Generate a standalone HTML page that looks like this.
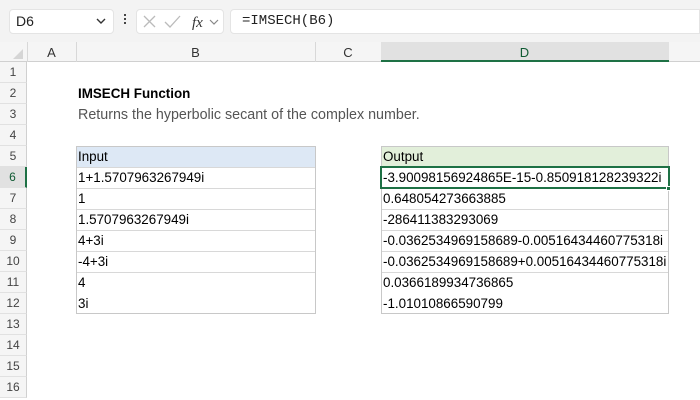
<!DOCTYPE html><html><head><style>
*{margin:0;padding:0;box-sizing:border-box}
body{width:700px;height:400px;overflow:hidden;background:#fff;font-family:"Liberation Sans",Arial,sans-serif;position:relative}
.a{position:absolute}
.t{font-size:13.4px;color:#000;white-space:nowrap;line-height:20px;padding-left:2px}
.rh{position:absolute;left:0;width:27px;height:21px;text-align:center;font-size:12px;color:#444;line-height:21px;border-bottom:1px solid #e1e1e1;background:#f5f5f5;border-right:1px solid #d0d0d0}
</style></head><body>
<div class="a" style="left:0;top:0;width:700px;height:42px;background:#f3f3f3"></div>
<div class="a" style="left:9px;top:9px;width:105px;height:25px;background:#fff;border-radius:4px;border:1px solid #e4e4e4"></div>
<div class="a" style="left:16px;top:13px;font-size:14px;color:#222">D6</div>
<svg class="a" style="left:95px;top:16px" width="12" height="10"><path d="M2 3 L6 7 L10 3" fill="none" stroke="#333" stroke-width="1.4"/></svg>
<div class="a" style="left:124px;top:14px;width:2px;height:2px;background:#444;box-shadow:0 4px 0 #444,0 8px 0 #444"></div>
<div class="a" style="left:136px;top:9px;width:88px;height:25px;background:#fff;border-radius:4px;border:1px solid #e4e4e4"></div>
<svg class="a" style="left:140px;top:12px" width="85" height="20"><path d="M4 4 L15 15 M15 4 L4 15" stroke="#bbb" stroke-width="1.3"/><path d="M25 10 L30 15 L40 4" fill="none" stroke="#bbb" stroke-width="1.3"/><text x="52" y="15" font-family="Liberation Serif" font-style="italic" font-size="15" fill="#333">fx</text><path d="M70 8 L74 12 L78 8" fill="none" stroke="#888" stroke-width="1.2"/></svg>
<div class="a" style="left:230px;top:9px;width:470px;height:25px;background:#fff;border-radius:4px 0 0 4px;border:1px solid #e4e4e4"></div>
<div class="a" style="left:242px;top:13px;font-family:'Liberation Mono',monospace;font-size:14px;color:#222">=IMSECH(B6)</div>
<div class="a" style="left:0;top:42px;width:700px;height:20px;background:#f5f5f5;border-bottom:1px solid #d0d0d0"></div>
<svg class="a" style="left:12px;top:48px" width="12" height="12"><path d="M11 1 L11 11 L1 11 Z" fill="#d5d5d5"/></svg>
<div class="a" style="left:27px;top:42px;width:1px;height:20px;background:#d8d8d8"></div>
<div class="a" style="left:76px;top:42px;width:1px;height:20px;background:#d8d8d8"></div>
<div class="a" style="left:315px;top:42px;width:1px;height:20px;background:#d8d8d8"></div>
<div class="a" style="left:381px;top:42px;width:1px;height:20px;background:#d8d8d8"></div>
<div class="a" style="left:668px;top:42px;width:1px;height:20px;background:#d8d8d8"></div>
<div class="a" style="left:381px;top:42px;width:288px;height:20px;background:#e1e1e1;border-bottom:2px solid #1e7145"></div>
<div class="a" style="left:27px;top:45px;width:49px;text-align:center;font-size:13px;color:#333">A</div>
<div class="a" style="left:76px;top:45px;width:239px;text-align:center;font-size:13px;color:#333">B</div>
<div class="a" style="left:315px;top:45px;width:66px;text-align:center;font-size:13px;color:#333">C</div>
<div class="a" style="left:381px;top:45px;width:287px;text-align:center;font-size:13px;color:#0f5a32">D</div>
<div class="rh" style="top:62px">1</div><div class="rh" style="top:83px">2</div><div class="rh" style="top:104px">3</div><div class="rh" style="top:125px">4</div><div class="rh" style="top:146px">5</div><div class="rh" style="top:167px;background:#e1e1e1;color:#0f5a32;border-right:2px solid #1e7145">6</div><div class="rh" style="top:188px">7</div><div class="rh" style="top:209px">8</div><div class="rh" style="top:230px">9</div><div class="rh" style="top:251px">10</div><div class="rh" style="top:272px">11</div><div class="rh" style="top:293px">12</div><div class="rh" style="top:314px">13</div><div class="rh" style="top:335px">14</div><div class="rh" style="top:356px">15</div><div class="rh" style="top:377px">16</div>
<div class="a t" style="left:76px;top:84px;font-weight:bold">IMSECH Function</div>
<div class="a t" style="left:76px;top:105px;color:#555;font-size:14.3px">Returns the hyperbolic secant of the complex number.</div>
<div class="a" style="left:76px;top:146px;width:240px;height:168px;border:1px solid #c8c8c8"></div>
<div class="a" style="left:77px;top:147px;width:238px;height:20px;background:#dde8f5"></div>
<div class="a t" style="left:76px;top:147px">Input</div>
<div class="a t" style="left:76px;top:168px">1+1.5707963267949i</div>
<div class="a t" style="left:76px;top:189px">1</div>
<div class="a t" style="left:76px;top:210px">1.5707963267949i</div>
<div class="a t" style="left:76px;top:231px">4+3i</div>
<div class="a t" style="left:76px;top:252px">-4+3i</div>
<div class="a t" style="left:76px;top:273px">4</div>
<div class="a t" style="left:76px;top:294px">3i</div>
<div class="a" style="left:381px;top:146px;width:288px;height:168px;border:1px solid #c8c8c8"></div>
<div class="a" style="left:382px;top:147px;width:286px;height:20px;background:#e2efda"></div>
<div class="a t" style="left:381px;top:147px">Output</div>
<div class="a t" style="left:381px;top:168px">-3.90098156924865E-15-0.850918128239322i</div>
<div class="a t" style="left:381px;top:189px">0.648054273663885</div>
<div class="a t" style="left:381px;top:210px">-286411383293069</div>
<div class="a t" style="left:381px;top:231px">-0.0362534969158689-0.00516434460775318i</div>
<div class="a t" style="left:381px;top:252px">-0.0362534969158689+0.00516434460775318i</div>
<div class="a t" style="left:381px;top:273px">0.0366189934736865</div>
<div class="a t" style="left:381px;top:294px">-1.01010866590799</div>
<div class="a" style="left:77px;top:167px;width:238px;height:126px;background:repeating-linear-gradient(#d8d8d8 0 1px,transparent 1px 21px)"></div>
<div class="a" style="left:382px;top:167px;width:286px;height:126px;background:repeating-linear-gradient(#d8d8d8 0 1px,transparent 1px 21px)"></div>
<div class="a" style="left:380px;top:166px;width:290px;height:23px;border:2px solid #1e7145"></div>
<div class="a" style="left:666px;top:186px;width:5px;height:5px;background:#1e7145;border:1px solid #fff"></div>
</body></html>
